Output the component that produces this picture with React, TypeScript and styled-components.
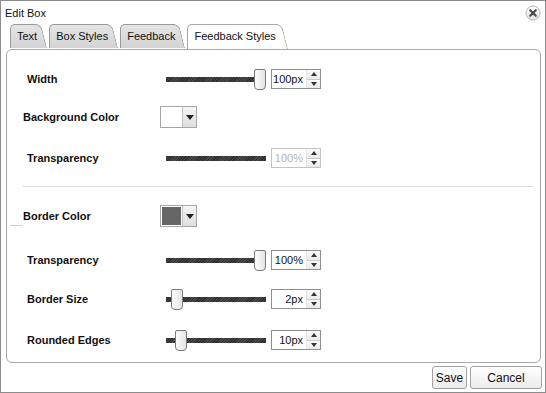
import React from "react";
import styled, { createGlobalStyle, css } from "styled-components";

const Global = createGlobalStyle`
  html, body { margin: 0; padding: 0; background: #fff; }
  body { font-family: "Liberation Sans", Arial, sans-serif; }
  * { box-sizing: border-box; }
`;

const Window = styled.div`
  width: 546px;
  height: 393px;
  border: 1px solid #8c8c8c;
  background: #fff;
  display: flex;
  flex-direction: column;
  font-family: "Liberation Sans", Arial, sans-serif;
  color: #000;
`;

const TitleBar = styled.div`
  height: 23px;
  display: flex;
  align-items: center;
  justify-content: space-between;
  padding: 0 4px 0 4px;
`;

const Title = styled.div`
  font-size: 11px;
  color: #111;
`;

const CloseButton = styled.div`
  width: 16px;
  height: 16px;
  display: flex;
  align-items: center;
  justify-content: center;
`;

const TabsRow = styled.div`
  height: 25px;
  display: flex;
  align-items: flex-start;
  gap: 2px;
  padding-left: 9px;
  position: relative;
  z-index: 2;
`;

const tabFill = (active: boolean) =>
  active
    ? css`background: #fff; border-color: #a8a8a8;`
    : css`background: linear-gradient(#e4e4e4, #d4d4d4); border-color: #9a9a9a;`;

const Tab = styled.div<{ $active?: boolean }>`
  position: relative;
  z-index: ${(p) => (p.$active ? 3 : 1)};
  height: ${(p) => (p.$active ? 25 : 24)}px;
  display: flex;
  align-items: center;
  padding: 0 ${(p) => (p.$active ? 12 : 10)}px ${(p) => (p.$active ? 1 : 0)}px 7px;
  font-size: 11px;
  color: #111;
  &::before {
    content: "";
    position: absolute;
    left: 0;
    top: 0;
    bottom: 0;
    right: 10px;
    border: 1px solid;
    border-right: none;
    border-bottom: none;
    border-top-left-radius: 5px;
    z-index: -1;
    ${(p) => tabFill(!!p.$active)}
  }
  &::after {
    content: "";
    position: absolute;
    top: 0;
    bottom: 0;
    right: 0;
    width: 18px;
    border: 1px solid;
    border-left: none;
    border-bottom: none;
    border-top-right-radius: 6px;
    transform: skewX(14deg);
    transform-origin: bottom left;
    z-index: -1;
    ${(p) => tabFill(!!p.$active)}
  }
`;

const Panel = styled.div`
  flex: 1;
  margin: 0 4px 0 5px;
  border: 1px solid #a8a8a8;
  border-radius: 6px;
  display: flex;
  flex-direction: column;
  position: relative;
  z-index: 1;
`;

const Row = styled.div<{ $mt: number }>`
  height: 22px;
  margin-top: ${(p) => p.$mt}px;
  display: flex;
  align-items: center;
  padding-left: 16px;
  position: relative;
`;

const Label = styled.div<{ $indent?: boolean }>`
  width: 137px;
  padding-left: ${(p) => (p.$indent ? 4 : 0)}px;
  font-size: 11px;
  font-weight: bold;
  color: #111;
`;

const Stub = styled.div`
  position: absolute;
  left: 3px;
  top: 20px;
  width: 13px;
  height: 1px;
  background: #d0d0d0;
`;

const Separator = styled.div<{ $mt: number }>`
  margin: ${(p) => p.$mt}px 7px 0 16px;
  height: 1px;
  background: #dcdcdc;
`;

const SliderTrack = styled.div`
  position: relative;
  margin-left: 6px;
  width: 100px;
  height: 5px;
  background: repeating-linear-gradient(135deg, #2e2e2e 0 1px, #4a4a4a 1px 2px);
`;

const Thumb = styled.div`
  position: absolute;
  top: -8px;
  width: 12px;
  height: 21px;
  border: 1px solid #7a7a7a;
  border-radius: 2px 2px 4px 4px;
  background: linear-gradient(90deg, #fdfdfd, #e4e4e4);
`;

const NumberBox = styled.div<{ $disabled?: boolean }>`
  margin-left: 5px;
  width: 50px;
  height: 20px;
  border: 1px solid ${(p) => (p.$disabled ? "#c4c4c4" : "#8e8e8e")};
  display: flex;
  background: #fff;
`;

const NumberText = styled.div<{ $disabled?: boolean }>`
  flex: 1;
  display: flex;
  align-items: center;
  justify-content: flex-end;
  padding-right: 3px;
  font-size: 11px;
  color: ${(p) => (p.$disabled ? "#b4b4b4" : "#111")};
`;

const Spinner = styled.div`
  width: 14px;
  display: flex;
  flex-direction: column;
  border-left: 1px solid #e2e2e2;
`;

const SpinHalf = styled.div<{ $down?: boolean }>`
  flex: 1;
  display: flex;
  align-items: center;
  justify-content: center;
  background: linear-gradient(#fbfbfb, #e9e9e9);
  ${(p) => p.$down && css`border-top: 1px solid #c8c8c8;`}
  &::after {
    content: "";
    border-left: 3px solid transparent;
    border-right: 3px solid transparent;
    ${(p) =>
      p.$down
        ? css`border-top: 4px solid #333;`
        : css`border-bottom: 4px solid #333;`}
  }
`;

const ColorPicker = styled.div`
  width: 37px;
  height: 22px;
  border: 1px solid #a6a6a6;
  display: flex;
  background: #fff;
`;

const Swatch = styled.div<{ $color: string }>`
  width: 21px;
  padding: 1px;
  background: #fff;
  &::after {
    content: "";
    display: block;
    width: 100%;
    height: 100%;
    background: ${(p) => p.$color};
  }
`;

const DropArrow = styled.div`
  flex: 1;
  display: flex;
  align-items: center;
  justify-content: center;
  border-left: 1px solid #c4c4c4;
  background: linear-gradient(#f6f6f6, #dedede);
  &::after {
    content: "";
    border-left: 4px solid transparent;
    border-right: 4px solid transparent;
    border-top: 5px solid #222;
  }
`;

const Footer = styled.div`
  display: flex;
  justify-content: flex-end;
  gap: 3px;
  padding: 3px 3px 3px 0;
`;

const Button = styled.button<{ $w: number }>`
  width: ${(p) => p.$w}px;
  height: 23px;
  border: 1px solid #a0a0a0;
  border-radius: 3px;
  background: linear-gradient(#ffffff, #ececec);
  font-family: "Liberation Sans", Arial, sans-serif;
  font-size: 12px;
  color: #111;
  padding: 0;
`;

type SliderRowProps = {
  mt: number;
  label: string;
  value: string;
  thumb?: number;
  disabled?: boolean;
};

const SliderRow = ({ mt, label, value, thumb, disabled }: SliderRowProps) => (
  <Row $mt={mt}>
    <Label $indent>{label}</Label>
    <SliderTrack>
      {thumb !== undefined && <Thumb style={{ left: `${thumb}px` }} />}
    </SliderTrack>
    <NumberBox $disabled={disabled}>
      <NumberText $disabled={disabled}>{value}</NumberText>
      <Spinner>
        <SpinHalf />
        <SpinHalf $down />
      </Spinner>
    </NumberBox>
  </Row>
);

const CloseIcon = () => (
  <svg width="16" height="16" viewBox="0 0 16 16">
    <defs>
      <linearGradient id="cg" x1="0" y1="0" x2="0" y2="1">
        <stop offset="0" stopColor="#ffffff" />
        <stop offset="1" stopColor="#e2e2e2" />
      </linearGradient>
    </defs>
    <circle cx="8" cy="8" r="7" fill="url(#cg)" stroke="#b4b4b4" strokeWidth="1" />
    <path d="M5.2 5.2 L10.8 10.8 M10.8 5.2 L5.2 10.8" stroke="#4a4a4a" strokeWidth="2.2" strokeLinecap="round" />
  </svg>
);

export default function App() {
  return (
    <>
      <Global />
      <Window>
        <TitleBar>
          <Title>Edit Box</Title>
          <CloseButton>
            <CloseIcon />
          </CloseButton>
        </TitleBar>
        <TabsRow>
          <Tab>Text</Tab>
          <Tab>Box Styles</Tab>
          <Tab>Feedback</Tab>
          <Tab $active>Feedback Styles</Tab>
        </TabsRow>
        <Panel>
          <SliderRow mt={18} label="Width" value="100px" thumb={88} />
          <Row $mt={16}>
            <Label>Background Color</Label>
            <ColorPicker>
              <Swatch $color="#ffffff" />
              <DropArrow />
            </ColorPicker>
          </Row>
          <SliderRow mt={19} label="Transparency" value="100%" disabled />
          <Separator $mt={17} />
          <Row $mt={18}>
            <Stub />
            <Label>Border Color</Label>
            <ColorPicker>
              <Swatch $color="#666666" />
              <DropArrow />
            </ColorPicker>
          </Row>
          <SliderRow mt={22} label="Transparency" value="100%" thumb={88} />
          <SliderRow mt={17} label="Border Size" value="2px" thumb={5} />
          <SliderRow mt={19} label="Rounded Edges" value="10px" thumb={9} />
        </Panel>
        <Footer>
          <Button $w={35}>Save</Button>
          <Button $w={72}>Cancel</Button>
        </Footer>
      </Window>
    </>
  );
}
